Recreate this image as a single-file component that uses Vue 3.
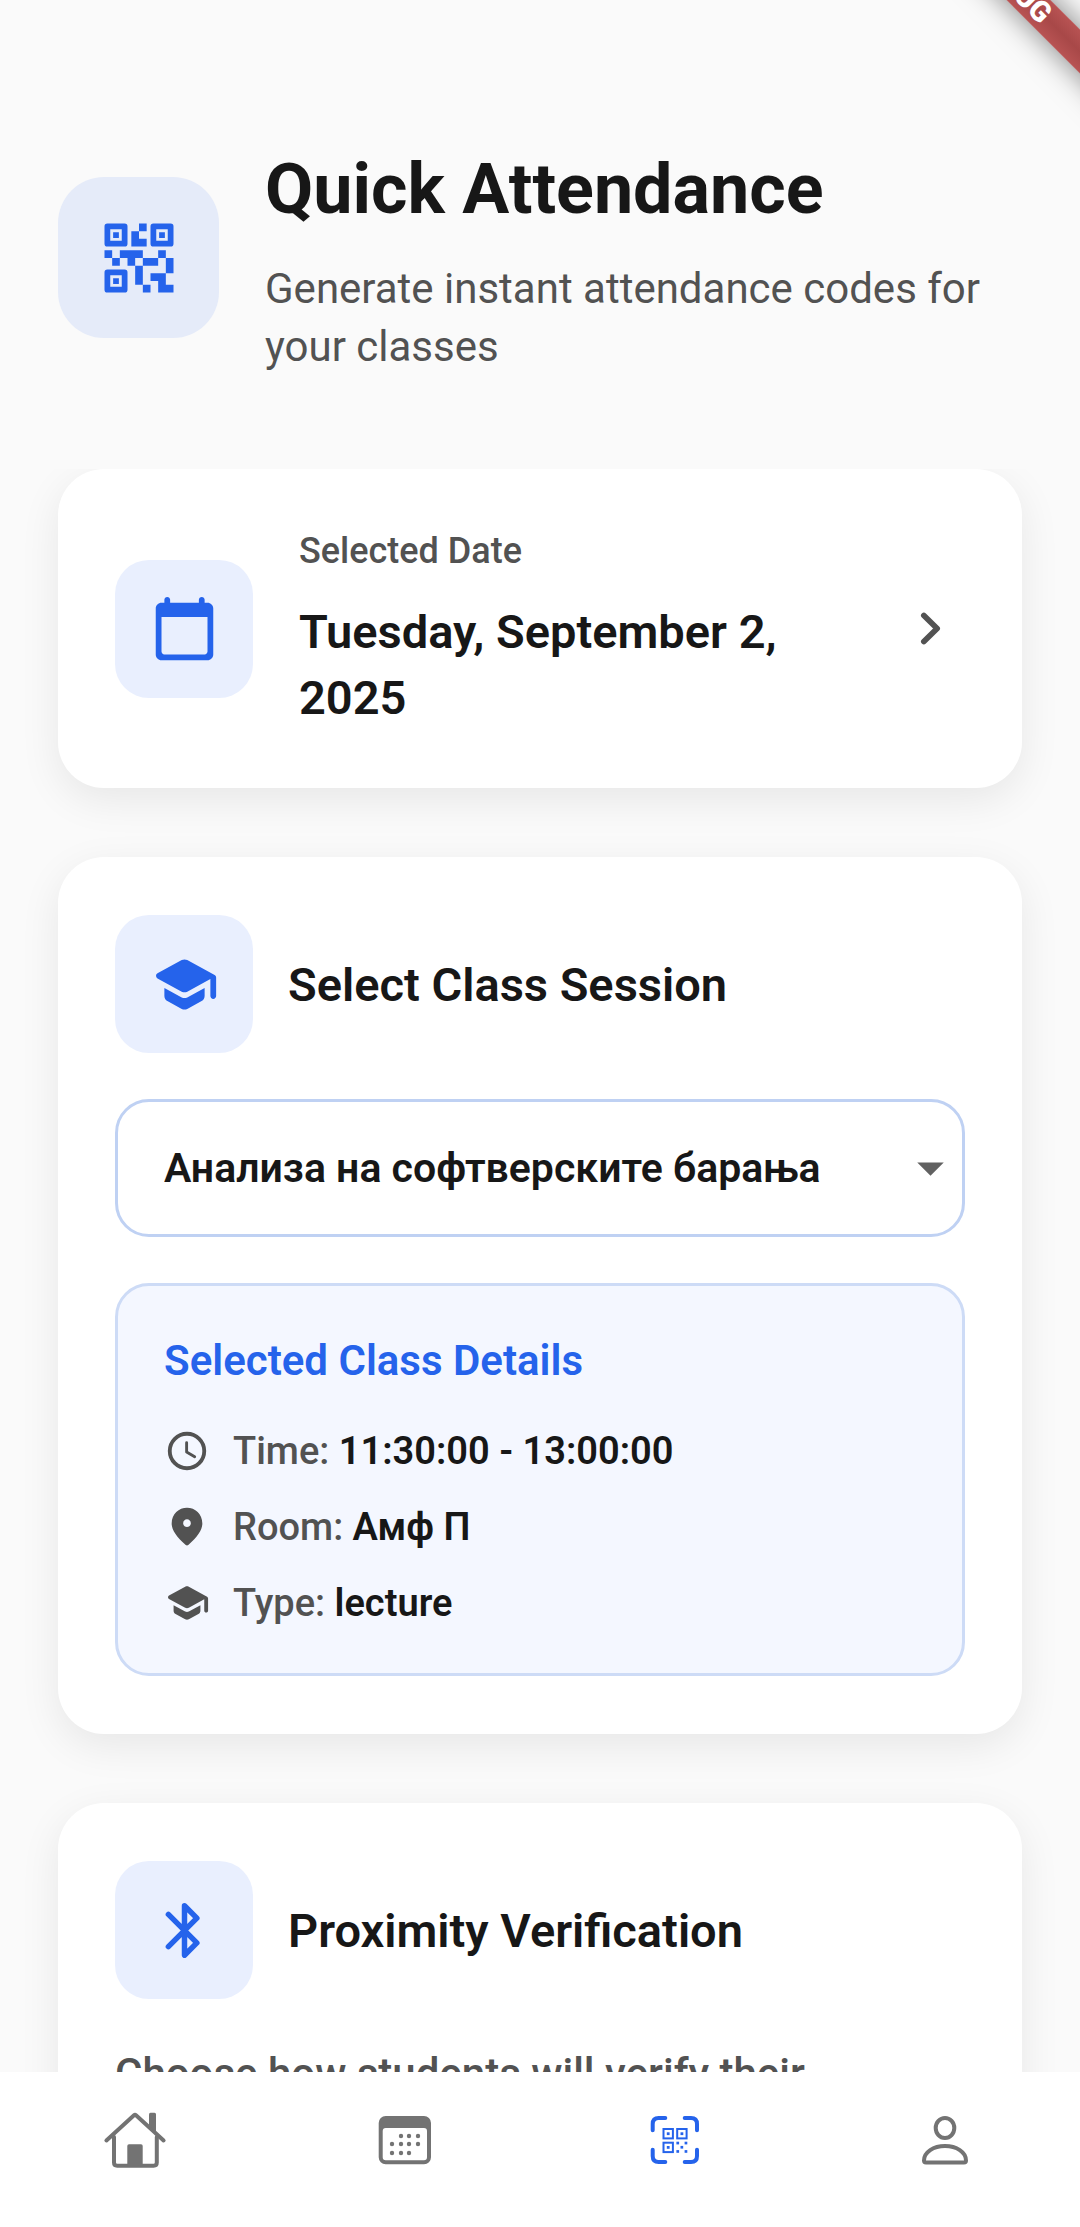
<script setup>
import { ref } from 'vue'

const session = ref('Анализа на софтверските барања')
const sessions = [session.value]

const details = [
  { icon: 'clock', label: 'Time:', value: '11:30:00 - 13:00:00' },
  { icon: 'pin', label: 'Room:', value: 'Амф П' },
  { icon: 'school', label: 'Type:', value: 'lecture' },
]

const schoolPath =
  'M5 13.18v2.81c0 .73.4 1.41 1.04 1.76l5 2.73c.6.33 1.32.33 1.92 0l5-2.73c.64-.35 1.04-1.03 1.04-1.76v-2.81l-6.04 3.3c-.6.33-1.32.33-1.92 0L5 13.18zm6.04-9.66l-8.43 4.6c-.69.38-.69 1.38 0 1.76l8.43 4.6c.6.33 1.32.33 1.92 0L21 10.09V16c0 .55.45 1 1 1s1-.45 1-1V9.59c0-.37-.2-.7-.52-.88l-9.52-5.19c-.6-.33-1.32-.33-1.92 0z'
const pinPath =
  'M12 2C7.8 2 4 5.22 4 10.2c0 3.18 2.45 6.92 7.34 11.23.38.33.95.33 1.33 0C17.55 17.12 20 13.38 20 10.2 20 5.22 16.2 2 12 2zm0 10c-1.1 0-2-.9-2-2s.9-2 2-2 2 .9 2 2-.9 2-2 2z'
const calendarPath =
  'M20 3h-1V2c0-.55-.45-1-1-1s-1 .45-1 1v1H7V2c0-.55-.45-1-1-1s-1 .45-1 1v1H4c-1.1 0-2 .9-2 2v16c0 1.1.9 2 2 2h16c1.1 0 2-.9 2-2V5c0-1.1-.9-2-2-2zm-1 18H5c-.55 0-1-.45-1-1V8h16v12c0 .55-.45 1-1 1z'
const qrModules =
  'M15 21h-2v-2h2zM13 14h-2v5h2zM21 12h-2v4h2zM19 10h-2v2h2zM7 12H5v2h2zM5 10H3v2h2zM12 5h2V3h-2zM19 19v-3h-4v2h2v3h4v-2zM17 12h-4v2h4zM13 10H7v2h2v2h2v-2h2zM14 9V7h-2V5h-2v4zM6.75 5.25h-1.5v1.5h1.5zM6.75 17.25h-1.5v1.5h1.5zM18.75 5.25h-1.5v1.5h1.5z'

const calendarDots = [
  [28, 28], [36, 28], [45, 28],
  [19, 36], [28, 36], [36, 36], [45, 36],
  [19, 45], [28, 45], [36, 45],
]
const finders = [[19.5, 20], [33.2, 20], [19.5, 33.7]]
const qrDots = [[33.4, 33.7], [41.6, 33.7], [37.5, 37.9], [33.4, 42.1], [41.6, 42.1]]
</script>

<template>
  <div class="app">
    <div class="ribbon-corner" aria-hidden="true"><span class="ribbon">DEBUG</span></div>

    <header class="header">
      <div class="header-icon">
        <svg viewBox="0 0 24 24">
          <path :d="qrModules" fill="currentColor" />
          <g fill="none" stroke="currentColor" stroke-width="1.5" stroke-linejoin="round">
            <rect x="3.75" y="3.75" width="4.5" height="4.5" />
            <rect x="15.75" y="3.75" width="4.5" height="4.5" />
            <rect x="3.75" y="15.75" width="4.5" height="4.5" />
          </g>
        </svg>
      </div>
      <div class="header-text">
        <h1>Quick Attendance</h1>
        <p>Generate instant attendance codes for your classes</p>
      </div>
    </header>

    <main class="content">
      <button type="button" class="card date-card">
        <span class="badge">
          <svg viewBox="0 0 24 24"><path :d="calendarPath" fill="currentColor" /></svg>
        </span>
        <span class="date-text">
          <span class="date-label">Selected Date</span>
          <span class="date-value">Tuesday, September 2, 2025</span>
        </span>
        <svg class="chevron" viewBox="0 0 24 24">
          <path d="M9.7 7.5l4.6 4.5-4.6 4.5" fill="none" stroke="currentColor" stroke-width="2" stroke-linecap="round" stroke-linejoin="round" />
        </svg>
      </button>

      <section class="card">
        <div class="card-head">
          <span class="badge">
            <svg viewBox="0 0 24 24"><path :d="schoolPath" fill="currentColor" /></svg>
          </span>
          <h2><label for="session">Select Class Session</label></h2>
        </div>

        <div class="select-wrap">
          <select id="session" v-model="session">
            <option v-for="s in sessions" :key="s">{{ s }}</option>
          </select>
          <svg class="arrow" viewBox="0 0 24 24"><path d="M7.4 9.9h9.2L12 14.5z" fill="currentColor" /></svg>
        </div>

        <div class="details">
          <h3>Selected Class Details</h3>
          <ul>
            <li v-for="d in details" :key="d.label">
              <svg viewBox="0 0 24 24">
                <g v-if="d.icon === 'clock'" fill="none" stroke="currentColor" stroke-linecap="round" stroke-linejoin="round">
                  <circle cx="12" cy="12" r="9" stroke-width="2" />
                  <path d="M11.8 7.7v4.8l4.2 2.5" stroke-width="1.5" />
                </g>
                <path v-else :d="d.icon === 'pin' ? pinPath : schoolPath" fill="currentColor" />
              </svg>
              <span>{{ d.label }} <strong>{{ d.value }}</strong></span>
            </li>
          </ul>
        </div>
      </section>

      <section class="card">
        <div class="card-head">
          <span class="badge">
            <svg viewBox="0 0 24 24">
              <path d="M6.4 6.4l9.9 9.9-4.3 4.3V3.4l4.3 4.3-9.9 9.9" fill="none" stroke="currentColor" stroke-width="1.9" stroke-linecap="round" stroke-linejoin="round" />
            </svg>
          </span>
          <h2>Proximity Verification</h2>
        </div>
        <p class="hint">Choose how students will verify their</p>
      </section>
    </main>

    <nav class="nav">
      <a href="#home" aria-label="Home">
        <svg viewBox="0 0 64 64">
          <g fill="none" stroke="currentColor" stroke-width="4" stroke-linecap="round" stroke-linejoin="round">
            <path d="M3.4 32.4L31 7.2q1-.9 2 0l27.6 25.2" />
            <path d="M11 29v25.5q0 3.2 3.2 3.2h36.4q3.2 0 3.2-3.2V29" />
          </g>
          <path d="M46 17V6.2q0-1.5 1.5-1.5h4q1.5 0 1.5 1.5V25z" fill="currentColor" />
          <path d="M24.3 58V38q0-1.7 1.7-1.7h12q1.7 0 1.7 1.7v20z" fill="currentColor" />
        </svg>
      </a>
      <a href="#calendar" aria-label="Calendar">
        <svg viewBox="0 0 64 64">
          <path fill="currentColor" fill-rule="evenodd" d="M12.7 8H51a7 7 0 0 1 7 7v34.3a7 7 0 0 1-7 7H12.700a7 7 0 0 1-7-7V15a7 7 0 0 1 7-7zM12.700 20a3 3 0 0 0-3 3v26.300a3 3 0 0 0 3 3H51a3 3 0 0 0 3-3V23a3 3 0 0 0-3-3z" />
          <circle v-for="([x, y], i) in calendarDots" :key="i" :cx="x" :cy="y" r="2.2" fill="currentColor" />
        </svg>
      </a>
      <a href="#attendance" class="active" aria-label="Attendance" aria-current="page">
        <svg viewBox="0 0 64 64">
          <path d="M9.7 22.3V16q0-6 6-6h6.600M41.700 10H48q6 0 6 6v6.300M54 41.700V48q0 6-6 6h-6.300M22.300 54H15.700q-6 0-6-6v-6.300" fill="none" stroke="currentColor" stroke-width="4" stroke-linecap="round" />
          <g v-for="([x, y], i) in finders" :key="i">
            <rect :x="x + 1" :y="y + 1" width="9.4" height="9.4" fill="none" stroke="currentColor" stroke-width="2" />
            <rect :x="x + 4.3" :y="y + 4.3" width="2.8" height="2.8" fill="currentColor" />
          </g>
          <rect v-for="([x, y], i) in qrDots" :key="'d' + i" :x="x" :y="y" width="2.7" height="2.7" fill="currentColor" />
        </svg>
      </a>
      <a href="#profile" aria-label="Profile">
        <svg viewBox="0 0 64 64">
          <g fill="none" stroke="currentColor" stroke-width="4" stroke-linejoin="round">
            <ellipse cx="32" cy="20" rx="9.3" ry="10" />
            <path d="M11 52.5C11 44 20.5 38 32 38s21 6 21 14.500q0 1.900-2 1.900H13q-2 0-2-1.900z" />
          </g>
        </svg>
      </a>
    </nav>
  </div>
</template>

<style>
body {
  margin: 0;
  background: #fafafa;
}
</style>

<style scoped>
.app {
  position: relative;
  display: flex;
  flex-direction: column;
  height: 100vh;
  overflow: hidden;
  background: #fafafa;
  color: #171717;
  font-family: Roboto, "Noto Sans", sans-serif;
}

h1, h2, h3, p, ul {
  margin: 0;
  padding: 0;
}

svg {
  display: block;
  flex: none;
}

/* Corner ribbon */
.ribbon-corner {
  position: absolute;
  top: 0;
  right: 0;
  width: 160px;
  height: 160px;
  overflow: hidden;
  pointer-events: none;
}

.ribbon {
  position: absolute;
  top: -30px;
  right: -134px;
  width: 400px;
  height: 31px;
  background: linear-gradient(#b85353, #a84848 50%, #b85353);
  box-shadow: 0 0 30px rgba(0, 0, 0, 0.5);
  color: #fff;
  font-size: 29px;
  font-weight: 900;
  line-height: 31px;
  text-align: center;
  transform: rotate(45deg);
}

/* Header */
.header {
  display: flex;
  align-items: center;
  gap: 46px;
  padding: 139px 58px 93px;
}

.header-icon {
  display: grid;
  flex: none;
  place-items: center;
  width: 161px;
  height: 161px;
  border-radius: 46px;
  background: #e5ebf9;
  color: #2563eb;
}

.header-icon svg {
  width: 92px;
  height: 92px;
}

.header-text {
  display: flex;
  flex: 1;
  flex-direction: column;
  gap: 24px;
  padding-top: 3px;
}

h1 {
  font-size: 70px;
  font-weight: 700;
  line-height: 94px;
}

.header-text p {
  color: #525252;
  font-size: 42px;
  line-height: 58px;
}

/* Cards */
.content {
  display: flex;
  flex: 1;
  flex-direction: column;
  gap: 69px;
  min-height: 0;
  padding: 0 58px;
  overflow-y: auto;
  scrollbar-width: none;
}

.card {
  box-sizing: border-box;
  flex: none;
  width: 100%;
  padding: 58px 57px;
  border: 0;
  border-radius: 46px;
  background: #fff;
  box-shadow: 0 12px 40px rgba(0, 0, 0, 0.08);
}

.badge {
  display: grid;
  flex: none;
  place-items: center;
  width: 138px;
  height: 138px;
  border-radius: 34px;
  background: #e9effe;
  color: #2563eb;
}

.badge svg,
.chevron {
  width: 69px;
  height: 69px;
}

.date-card {
  display: flex;
  align-items: center;
  gap: 46px;
  padding: 57px;
  color: inherit;
  font-family: inherit;
  text-align: left;
}

.date-text {
  display: flex;
  flex: 1;
  flex-direction: column;
  gap: 23px;
}

.date-label {
  color: #525252;
  font-size: 36px;
  font-weight: 500;
  line-height: 50px;
}

.date-value {
  font-size: 47px;
  font-weight: 600;
  line-height: 66px;
}

.chevron {
  color: #525252;
}

.card-head {
  display: flex;
  align-items: center;
  gap: 35px;
  margin-bottom: 46px;
}

h2 {
  padding-top: 2px;
  font-size: 47px;
  font-weight: 600;
  line-height: 66px;
}

.select-wrap {
  position: relative;
  margin-bottom: 46px;
}

select {
  display: block;
  box-sizing: border-box;
  width: 100%;
  height: 138px;
  padding: 0 80px 0 46px;
  border: 3px solid #bfd1f3;
  border-radius: 34px;
  appearance: none;
  background: #fff;
  color: #171717;
  font-family: inherit;
  font-size: 41px;
  font-weight: 600;
}

.arrow {
  position: absolute;
  top: 35px;
  right: 0;
  width: 69px;
  height: 69px;
  color: #616161;
  pointer-events: none;
}

.details {
  padding: 46px;
  border: 3px solid #cddbf6;
  border-radius: 34px;
  background: #f4f7ff;
}

h3 {
  margin-bottom: 37px;
  color: #2563eb;
  font-size: 42px;
  font-weight: 600;
  line-height: 58px;
}

ul {
  display: flex;
  flex-direction: column;
  gap: 28px;
  list-style: none;
}

li {
  display: flex;
  align-items: center;
  gap: 23px;
  color: #525252;
  font-size: 38px;
  font-weight: 500;
  line-height: 48px;
}

li svg {
  width: 46px;
  height: 46px;
}

strong {
  color: #171717;
  font-weight: 600;
}

.hint {
  color: #525252;
  font-size: 42px;
  font-weight: 500;
  line-height: 58px;
}

/* Bottom navigation */
.nav {
  position: relative;
  display: flex;
  flex: none;
  background: #fff;
}

.nav a {
  display: flex;
  flex: 1;
  justify-content: center;
  padding: 36px 0 55px;
  color: #737373;
}

.nav .active {
  color: #2563eb;
}

.nav svg {
  width: 64px;
  height: 64px;
}
</style>
